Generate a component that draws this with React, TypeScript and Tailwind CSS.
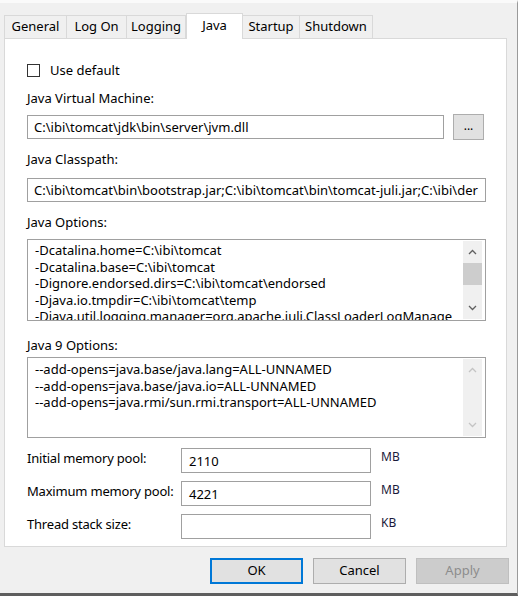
import React from 'react';

const font = { fontFamily: '"Noto Sans", "Segoe UI", sans-serif' };

const tabs = [
  { label: 'General', w: 'w-[63px]' },
  { label: 'Log On', w: 'w-[61px]' },
  { label: 'Logging', w: 'w-[60px]' },
  { label: 'Java', w: 'w-[57px]', active: true },
  { label: 'Startup', w: 'w-[58px]' },
  { label: 'Shutdown', w: 'w-[74px]' },
];

const javaOptions = [
  '-Dcatalina.home=C:\\ibi\\tomcat',
  '-Dcatalina.base=C:\\ibi\\tomcat',
  '-Dignore.endorsed.dirs=C:\\ibi\\tomcat\\endorsed',
  '-Djava.io.tmpdir=C:\\ibi\\tomcat\\temp',
  '-Djava.util.logging.manager=org.apache.juli.ClassLoaderLogManage',
];

const java9Options = [
  '--add-opens=java.base/java.lang=ALL-UNNAMED',
  '--add-opens=java.base/java.io=ALL-UNNAMED',
  '--add-opens=java.rmi/sun.rmi.transport=ALL-UNNAMED',
];

function Chevron({ up, disabled }: { up?: boolean; disabled?: boolean }) {
  return (
    <svg width="9" height="6" viewBox="0 0 9 6" className="block">
      <path
        d={up ? 'M1 5 L4.5 1.5 L8 5' : 'M1 1 L4.5 4.5 L8 1'}
        fill="none"
        stroke={disabled ? '#c4c4c4' : '#606060'}
        strokeWidth="1.3"
      />
    </svg>
  );
}

function TextBox({ lines, disabled, h, pt }: { lines: string[]; disabled?: boolean; h: string; pt: string }) {
  return (
    <div className={`mr-[20px] flex ${h} border border-[#a0a0a0] bg-white`}>
      <div className={`flex-1 overflow-hidden whitespace-nowrap pl-[7px] ${pt} text-[13px] leading-[16.5px] text-black`}>
        {lines.map((l) => (
          <div key={l}>{l}</div>
        ))}
      </div>
      <div className="my-[1px] mr-[3px] flex w-[19px] flex-col items-center bg-[#f0f0f0]">
        <div className="flex h-[19px] items-center justify-center pt-[3px]">
          <Chevron up disabled={disabled} />
        </div>
        {!disabled && <div className="mt-[3px] h-[22px] w-[19px] bg-[#cdcdcd]" />}
        <div className="flex-1" />
        <div className="flex h-[19px] items-center justify-center pb-[4px]">
          <Chevron disabled={disabled} />
        </div>
      </div>
    </div>
  );
}

function MemoryRow({ label, value, unit }: { label: string; value: string; unit: string }) {
  return (
    <div className="flex h-[25px] items-start">
      <div className="w-[154px] pt-[2px] text-[13px] leading-[16px] tracking-[-0.2px]">{label}</div>
      <div className="h-[25px] w-[190px] border border-[#a0a0a0] bg-white pl-[7px] pt-[4px] text-[13px] leading-[16px]">
        {value}
      </div>
      <div className="pl-[10px] pt-[1px] text-[12px] leading-[16px] text-[#1a1a3a]">{unit}</div>
    </div>
  );
}

export default function App() {
  return (
    <div
      style={font}
      className="flex h-[596px] w-[518px] flex-col border-t-[3px] border-r border-b-[3px] border-t-[#fafafa] border-r-[#9a9a9a] border-b-[#5e5e5e] bg-[#f0f0f0] text-black"
    >
      <div className="flex items-end px-[4px] pt-[10px]">
        {tabs.map((t) =>
          t.active ? (
            <div
              key={t.label}
              className={`${t.w} relative z-10 -mb-px flex h-[26px] items-start justify-center border border-b-0 border-[#d9d9d9] bg-white pt-[3px] text-[13px] leading-[16px]`}
            >
              {t.label}
            </div>
          ) : (
            <div
              key={t.label}
              className={`${t.w} -ml-px flex h-[23px] items-center justify-center border border-b-0 border-[#d9d9d9] bg-[#f0f0f0] text-[13px] first:ml-0`}
            >
              {t.label}
            </div>
          )
        )}
      </div>

      <div className="mx-[4px] flex h-[509px] w-[503px] flex-col border border-[#d9d9d9] bg-white pl-[22px]">
        <div className="mt-[24px] flex items-center">
          <div className="h-[13px] w-[13px] border border-[#333333] bg-white" />
          <span className="ml-[10px] text-[13px] leading-[14px]">Use default</span>
        </div>

        <div className="mt-[13px] text-[13px] leading-[16px]">Java Virtual Machine:</div>
        <div className="mt-[8px] flex items-center">
          <div className="h-[24px] w-[417px] overflow-hidden whitespace-nowrap border border-[#a0a0a0] bg-white pl-[6px] pt-[3px] text-[13px] leading-[16px]">
            {'C:\\ibi\\tomcat\\jdk\\bin\\server\\jvm.dll'}
          </div>
          <div className="ml-[9px] flex h-[26px] w-[31px] items-center justify-center border border-[#adadad] bg-[#e1e1e1] pb-[2px] text-[12px] leading-[12px]">
            ...
          </div>
        </div>

        <div className="mt-[11px] text-[13px] leading-[16px]">Java Classpath:</div>
        <div className="mt-[11px] mr-[20px] h-[24px] overflow-hidden whitespace-nowrap border border-[#a0a0a0] bg-white pl-[6px] pt-[3px] text-[13px] leading-[16px]">
          {'C:\\ibi\\tomcat\\bin\\bootstrap.jar;C:\\ibi\\tomcat\\bin\\tomcat-juli.jar;C:\\ibi\\der'}
        </div>

        <div className="mt-[12px] text-[13px] leading-[16px]">Java Options:</div>
        <div className="mt-[9px]">
          <TextBox lines={javaOptions} h="h-[82px]" pt="pt-[2px]" />
        </div>

        <div className="mt-[16px] text-[13px] leading-[16px]">Java 9 Options:</div>
        <div className="mt-[4px]">
          <TextBox lines={java9Options} h="h-[81px]" pt="pt-[3px]" disabled />
        </div>

        <div className="mt-[10px] flex flex-col gap-[8px]">
          <MemoryRow label="Initial memory pool:" value="2110" unit="MB" />
          <MemoryRow label="Maximum memory pool:" value="4221" unit="MB" />
          <MemoryRow label="Thread stack size:" value="" unit="KB" />
        </div>
      </div>

      <div className="mt-[11px] flex justify-end gap-[10px] pr-[8px] text-[13px]">
        <div className="flex h-[26px] w-[93px] items-center justify-center border-2 border-[#0078d7] bg-[#e1e1e1]">
          OK
        </div>
        <div className="flex h-[26px] w-[93px] items-center justify-center border border-[#adadad] bg-[#e1e1e1]">
          Cancel
        </div>
        <div className="flex h-[26px] w-[93px] items-center justify-center border border-[#bfbfbf] bg-[#cccccc] text-[#8c8c8c]">
          Apply
        </div>
      </div>
    </div>
  );
}
